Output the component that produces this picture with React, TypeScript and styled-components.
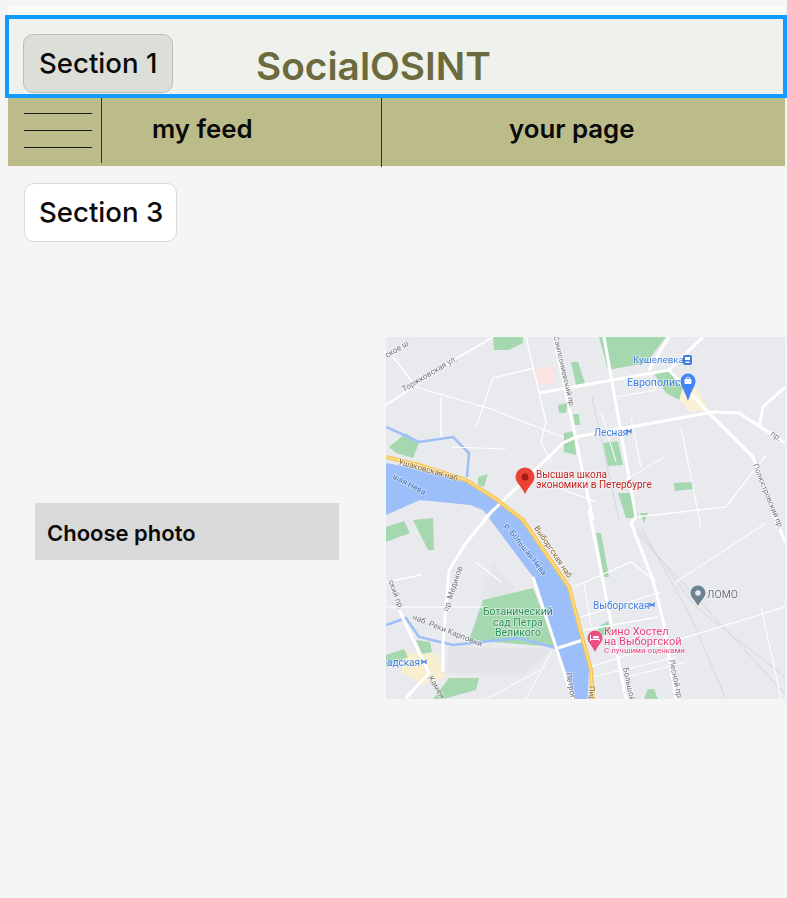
import React from "react";
import styled, { createGlobalStyle } from "styled-components";

const Global = createGlobalStyle`
  html, body { margin: 0; padding: 0; background: #f5f5f5; }
  * { box-sizing: border-box; }
`;

const Page = styled.div`
  width: 787px;
  height: 898px;
  overflow: hidden;
  padding-top: 6px;
  background: #f5f5f5;
  font-family: Inter, "Liberation Sans", sans-serif;
  color: #0a0a0a;
`;

const TopStrip = styled.div`
  height: 9px;
  margin: 0 2px 0 8px;
  background: #fdfafa;
`;

const Header = styled.header`
  height: 83px;
  margin-left: 5px;
  border: 4.5px solid #0f9bff;
  background: #eff1ed;
  display: flex;
  align-items: flex-start;
  padding: 14.5px 0 0 14px;
`;

const SectionLabel = styled.div<{ $active?: boolean; $w: number }>`
  width: ${(p) => p.$w}px;
  height: 59px;
  border-radius: 10px;
  border: 1px solid ${(p) => (p.$active ? "#bcbfb2" : "#d9d9d9")};
  background: ${(p) => (p.$active ? "#dcdfd7" : "#ffffff")};
  display: flex;
  align-items: center;
  padding: ${(p) => (p.$active ? "1px 0 0 15px" : "0 0 0 14px")};
  font-size: 27.6px;
  font-weight: 450;
  line-height: 1;
`;

const Title = styled.h1`
  margin: 9px 0 0 83px;
  font-size: 38.8px;
  font-weight: 600;
  line-height: 46px;
  color: #6b6b3e;
`;

const Nav = styled.nav`
  height: 68px;
  margin: 0 2px 0 8px;
  background: #bcbc8b;
  display: grid;
  grid-template-columns: 94px 280px 1fr;
  font-size: 25.8px;
  font-weight: 600;
`;

const Burger = styled.div`
  height: 65px;
  padding: 15px 0 0 16px;
  border-right: 1px solid #333;
  display: flex;
  flex-direction: column;
  gap: 16px;
`;

const BurgerLine = styled.span`
  display: block;
  width: 68px;
  height: 1px;
  background: #1a1a1a;
`;

const NavItem = styled.div<{ $pad: number; $divider?: boolean }>`
  display: flex;
  align-items: center;
  height: 61px;
  padding-left: ${(p) => p.$pad}px;
  ${(p) => (p.$divider ? "border-right: 1px solid #333; height: 69px; padding-bottom: 8px;" : "")}
`;

const SectionThree = styled.div`
  margin: 17px 0 0 24px;
`;

const Content = styled.main`
  display: flex;
  align-items: flex-start;
  margin-top: 95px;
  padding-left: 35px;
`;

const PhotoButton = styled.div`
  width: 304px;
  height: 57px;
  margin-top: 166px;
  padding: 2px 0 0 12px;
  background: #d9d9d9;
  display: flex;
  align-items: center;
  font-size: 22px;
  font-weight: 600;
`;

const MapFrame = styled.div`
  width: 399px;
  height: 362px;
  margin-left: 47px;
  overflow: hidden;
  background: #e9eaee;
`;

const MapSvg = styled.svg`
  display: block;
  filter: blur(0.5px);
  font-family: Roboto, "Liberation Sans", sans-serif;
`;

const parks = [
  "213,0 280,0 260,26 222,33",
  "107,0 137,0 137,6 123,13 108,13",
  "185,25 192,25 199,46 190,48",
  "267,35 287,35 297,50 293,63 280,56",
  "217,106 232,104 237,128 222,129",
  "3,110 20,96 33,106 27,121 10,116",
  "172,68 182,66 180,76 173,76",
  "187,77 193,77 194,88 189,88",
  "178,96 188,94 190,118 178,115",
  "92,140 102,137 98,150 92,148",
  "288,146 307,145 307,152 289,154",
  "232,156 245,156 253,181 240,181",
  "97,263 147,251 170,310 83,303",
  "27,183 47,181 48,213 42,213",
  "0,205 0,190 18,184 24,196",
  "210,196 215,196 223,240 218,240",
  "63,341 93,341 90,353 57,362 47,362",
  "30,303 44,305 46,315 36,317",
  "0,318 18,312 22,320 0,330",
  "212,290 222,284 226,295 212,300",
  "258,362 262,352 268,352 272,362",
  "254,176 262,176 258,186",
];

const thin: [string, number][] = [
  ["0,68 68,23 107,0", 2],
  ["7,20 30,50 105,72 177,100", 1.3],
  ["55,60 55,100", 1.3],
  ["90,90 107,41 148,31", 1.3],
  ["140,0 160,85 155,105 165,125", 1.3],
  ["65,110 120,112", 1],
  ["230,60 270,53 262,33", 1],
  ["295,90 315,190", 1],
  ["250,180 340,170 380,118", 1.3],
  ["278,120 240,143", 1],
  ["170,150 210,165", 1.3],
  ["215,75 230,125", 1],
  ["245,80 255,130", 1],
  ["90,225 115,245", 1.3],
  ["0,245 35,238", 1.3],
  ["0,270 100,270", 1],
  ["188,250 245,225 268,243", 1.3],
  ["195,280 275,255", 1.3],
  ["198,293 272,280", 1.3],
  ["203,330 399,270", 1.2],
  ["290,245 380,186", 1],
  ["198,245 205,290", 1],
  ["205,340 250,330 290,320", 1],
  ["140,362 165,315", 1],
  ["375,270 395,362", 1],
  ["160,330 100,362", 1],
  ["240,340 300,325", 1],
];

const wide: string[] = [
  "97,183 177,106 190,100 327,75 353,76 399,106",
  "218,0 250,180 245,186 267,243 277,283 290,362",
  "168,0 207,183",
  "203,173 240,362",
  "153,56 283,33 320,73 367,120 390,183 399,205",
  "263,33 283,0",
  "283,33 317,0",
  "373,90 377,70 399,50",
  "107,173 80,206 63,233 57,306 57,335",
  "13,273 43,336 20,361",
  "172,311 197,303",
  "147,240 170,310 187,362",
];

const rail = [
  "206,60 233,183",
  "245,190 333,285 399,357",
  "250,190 310,270 399,340",
  "255,190 305,280 340,362",
];

const Labels = styled.g`
  text { paint-order: stroke; stroke: rgba(255, 255, 255, 0.55); stroke-width: 1.5px; }
`;

const Rotated = ({ x, y, a, c = "#70757a", s = 8, end, children }: { x: number; y: number; a: number; c?: string; s?: number; end?: boolean; children: string }) => (
  <text x={x} y={y} fontSize={s} fill={c} textAnchor={end ? "end" : "start"} transform={`rotate(${a} ${x} ${y})`}>
    {children}
  </text>
);

const Pin = ({ x, y, r, h, c }: { x: number; y: number; r: number; h: number; c: string }) => (
  <path d={`M${x} ${y + h}C${x - r * 0.35} ${y + h * 0.55} ${x - r} ${y + r * 0.6} ${x - r} ${y}A${r} ${r} 0 1 1 ${x + r} ${y}C${x + r} ${y + r * 0.6} ${x + r * 0.35} ${y + h * 0.55} ${x} ${y + h}Z`} fill={c} />
);

const CityMap = () => (
  <MapSvg width={399} height={362} viewBox="0 0 399 362">
    <rect width="399" height="362" fill="#e9eaee" />
    <polygon points="63,310 166,312 140,336 60,336" fill="#e3e4e8" />
    <polygon points="93,262 107,225 128,250 125,258" fill="#e5e6ea" />
    <polygon points="148,31 167,29 170,46 152,48" fill="#fbe3e4" />
    <polygon points="297,50 310,50 323,73 303,75 293,62" fill="#f9f0d6" />
    <polygon points="20,316 50,316 60,340 38,348 15,335" fill="#f8efd0" />
    {parks.map((p) => (
      <polygon key={p} points={p} fill="#a6d8b0" />
    ))}
    {rail.map((p) => (
      <polyline key={p} points={p} fill="none" stroke="#d6d7db" strokeWidth="1" />
    ))}
    <polygon
      points="0,126 33,132 80,145 110,162 137,183 183,250 197,303 203,330 202,362 187,362 170,310 147,240 97,173 84,168 34,163 0,178"
      fill="#9dbff9"
    />
    <polyline points="0,90 33,105 67,100 83,116 81,140" fill="none" stroke="#9dbff9" strokeWidth="2.5" />
    <polyline points="0,288 20,281 33,300 67,308 133,301 170,311" fill="none" stroke="#9dbff9" strokeWidth="2.5" />
    {thin.map(([p, w]) => (
      <polyline key={p} points={p} fill="none" stroke="#ffffff" strokeWidth={w} />
    ))}
    {wide.map((p) => (
      <polyline key={p} points={p} fill="none" stroke="#ffffff" strokeWidth="3" />
    ))}
    <polyline points="0,120 33,128 80,143 110,162 137,183 183,250 197,303 205,333 207,362" fill="none" stroke="#f6c658" strokeWidth="4" />
    <polyline points="0,120 33,128 80,143 110,162 137,183 183,250 197,303 205,333 207,362" fill="none" stroke="#fdeba0" strokeWidth="1" />
    <Labels>
      <Rotated x={1} y={21} a={-31}>ское ш.</Rotated>
      <Rotated x={18} y={55} a={-31}>Торжковская ул.</Rotated>
      <Rotated x={184} y={71} a={77} s={7.5} end>Сампсониевский пр.</Rotated>
      <Rotated x={367} y={128} a={68} s={7.5}>Полюстровский пр.</Rotated>
      <Rotated x={384} y={98} a={35}>пр.</Rotated>
      <Rotated x={12} y={127} a={16} c="#80612c">Ушаковская наб.</Rotated>
      <Rotated x={38} y={158} a={28} c="#3367b5" end>шая Нева</Rotated>
      <Rotated x={118} y={189} a={52} c="#3367b5">р. Большая Нева</Rotated>
      <Rotated x={148} y={191} a={56} c="#80612c">Выборгская наб.</Rotated>
      <Rotated x={62} y={275} a={-72}>пр. Медиков</Rotated>
      <Rotated x={26} y={282} a={22}>наб. Реки Карповки</Rotated>
      <Rotated x={42} y={341} a={58}>Камен</Rotated>
      <Rotated x={13} y={273} a={70} end>ский пр.</Rotated>
      <Rotated x={180} y={336} a={80}>Петрог</Rotated>
      <Rotated x={203} y={349} a={88} c="#80612c">Пир</Rotated>
      <Rotated x={237} y={331} a={78}>Большой</Rotated>
      <Rotated x={283} y={323} a={78}>Лесной пр.</Rotated>
      <Rotated x={247} y={26} a={0} c="#3f7fe0" s={9.8}>Кушелевка</Rotated>
      <Rotated x={241} y={49} a={0} c="#3f7fe0" s={10.5}>Европолис</Rotated>
      <Rotated x={208} y={99} a={0} c="#3f7fe0" s={10}>Лесная</Rotated>
      <Rotated x={207} y={272} a={0} c="#3f7fe0" s={10}>Выборгская</Rotated>
      <Rotated x={34} y={329} a={0} c="#3f7fe0" s={10} end>радская</Rotated>
      <Rotated x={321} y={261} a={0} s={10.5}>ЛОМО</Rotated>
      <Rotated x={150} y={141} a={0} c="#c5221f" s={10}>Высшая школа</Rotated>
      <Rotated x={150} y={151} a={0} c="#c5221f" s={10}>экономики в Петербурге</Rotated>
      <Rotated x={218} y={298} a={0} c="#e8437e" s={11}>Кино Хостел</Rotated>
      <Rotated x={218} y={308} a={0} c="#e8437e" s={11}>на Выборгской</Rotated>
      <Rotated x={218} y={316} a={0} c="#e8437e" s={8}>С лучшими оценками</Rotated>
      <Rotated x={97} y={278} a={0} c="#2f8f5f" s={10.5}>Ботанический</Rotated>
      <Rotated x={107} y={289} a={0} c="#2f8f5f" s={10.5}>сад Петра</Rotated>
      <Rotated x={109} y={299} a={0} c="#2f8f5f" s={10.5}>Великого</Rotated>
    </Labels>
    <rect x="297" y="18" width="9" height="10" rx="2" fill="#3f7fe0" />
    <rect x="299" y="20" width="5" height="3" fill="#ffffff" />
    <rect x="299.5" y="24.5" width="4" height="1.5" fill="#ffffff" />
    <Pin x={302} y={44} r={7.5} h={20} c="#4285f4" />
    <rect x="298.5" y="42" width="7" height="5" rx="1" fill="#ffffff" />
    <path d="M300 42a2 2 0 0 1 4 0" fill="none" stroke="#ffffff" strokeWidth="0.8" />
    <path d="M241 96.5v-3.5l2 2 2-2v3.5" fill="none" stroke="#3f7fe0" strokeWidth="1.2" />
    <path d="M264 270v-3.5l2 2 2-2v3.5" fill="none" stroke="#3f7fe0" strokeWidth="1.2" />
    <path d="M36 327v-3.5l2 2 2-2v3.5" fill="none" stroke="#3f7fe0" strokeWidth="1.2" />
    <Pin x={139} y={140} r={9.5} h={17} c="#ea4335" />
    <circle cx="139" cy="140" r="3.4" fill="#a61b14" />
    <Pin x={209} y={301} r={7.5} h={14} c="#ec4d83" />
    <path d="M204.5 304v-6M204.5 302.5h9v1.5" fill="none" stroke="#ffffff" strokeWidth="1" />
    <rect x="207" y="299" width="6" height="2.5" rx="1" fill="#ffffff" />
    <Pin x={312} y={256} r={7.5} h={13} c="#6b8290" />
    <circle cx="312" cy="256" r="2.8" fill="#e9eaee" />
  </MapSvg>
);

export default function App() {
  return (
    <Page>
      <Global />
      <TopStrip />
      <Header>
        <SectionLabel $active $w={150}>Section 1</SectionLabel>
        <Title>SocialOSINT</Title>
      </Header>
      <Nav>
        <Burger>
          <BurgerLine />
          <BurgerLine />
          <BurgerLine />
        </Burger>
        <NavItem $pad={50} $divider>my feed</NavItem>
        <NavItem $pad={127}>your page</NavItem>
      </Nav>
      <SectionThree>
        <SectionLabel $w={153}>Section 3</SectionLabel>
      </SectionThree>
      <Content>
        <PhotoButton>Choose photo</PhotoButton>
        <MapFrame>
          <CityMap />
        </MapFrame>
      </Content>
    </Page>
  );
}
